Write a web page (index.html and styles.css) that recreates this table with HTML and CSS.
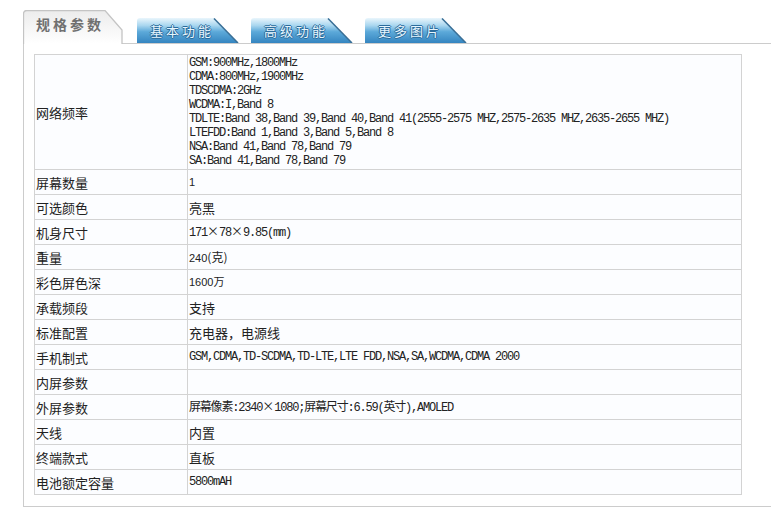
FILE: index.html
```html
<!DOCTYPE html>
<html lang="zh">
<head>
<meta charset="utf-8">
<title>规格参数</title>
<link rel="stylesheet" href="styles.css">
</head>
<body>
<div class="page">
  <div class="tabs">
    <div class="tab tab-active">
      <svg class="tab-bg" width="100" height="34" viewBox="0 0 100 34">
        <defs>
          <linearGradient id="ga" x1="0" y1="0" x2="0" y2="1">
            <stop offset="0" stop-color="#ececec"/>
            <stop offset="1" stop-color="#ffffff"/>
          </linearGradient>
        </defs>
        <path d="M0.5 34 V4 Q0.5 0.5 4 0.5 H82 L99 20 V34" fill="url(#ga)" stroke="#c4c4c4" stroke-width="1.3"/>
      </svg>
      <span class="tab-label">规格参数</span>
    </div>
    <div class="tab tab-blue">
      <svg class="tab-bg" width="102" height="25" viewBox="0 0 102 25">
        <defs>
          <linearGradient id="gb" x1="0" y1="0" x2="0" y2="1">
            <stop offset="0" stop-color="#eaf6fc"/>
            <stop offset="0.3" stop-color="#a9d6ef"/>
            <stop offset="0.55" stop-color="#5ca9d9"/>
            <stop offset="1" stop-color="#3585c0"/>
          </linearGradient>
        </defs>
        <path d="M0 25 V3 Q0 0 3 0 H77 L101 25 Z" fill="url(#gb)"/>
        <path d="M77 0.5 L101 25" stroke="#3a6f96" stroke-width="1.5"/>
      </svg>
      <span class="tab-label">基本功能</span>
    </div>
    <div class="tab tab-blue">
      <svg class="tab-bg" width="102" height="25" viewBox="0 0 102 25">
        <path d="M0 25 V3 Q0 0 3 0 H77 L101 25 Z" fill="url(#gb)"/>
        <path d="M77 0.5 L101 25" stroke="#3a6f96" stroke-width="1.5"/>
      </svg>
      <span class="tab-label">高级功能</span>
    </div>
    <div class="tab tab-blue">
      <svg class="tab-bg" width="102" height="25" viewBox="0 0 102 25">
        <path d="M0 25 V3 Q0 0 3 0 H77 L101 25 Z" fill="url(#gb)"/>
        <path d="M77 0.5 L101 25" stroke="#3a6f96" stroke-width="1.5"/>
      </svg>
      <span class="tab-label">更多图片</span>
    </div>
  </div>
  <div class="panel">
    <table class="spec">
      <tr class="row-tall">
        <th>网络频率</th>
        <td class="mono">GSM:900MHz,1800MHz<br>CDMA:800MHz,1900MHz<br>TDSCDMA:2GHz<br>WCDMA:I,Band 8<br>TDLTE:Band 38,Band 39,Band 40,Band 41(2555-2575 MHZ,2575-2635 MHZ,2635-2655 MHZ)<br>LTEFDD:Band 1,Band 3,Band 5,Band 8<br>NSA:Band 41,Band 78,Band 79<br>SA:Band 41,Band 78,Band 79</td>
      </tr>
      <tr><th>屏幕数量</th><td class="num">1</td></tr>
      <tr><th>可选颜色</th><td>亮黑</td></tr>
      <tr><th>机身尺寸</th><td class="mono">171<span class="cjk">×</span>78<span class="cjk">×</span>9.85(mm)</td></tr>
      <tr><th>重量</th><td class="num">240<span class="cjk">(克)</span></td></tr>
      <tr><th>彩色屏色深</th><td class="num">1600万</td></tr>
      <tr><th>承载频段</th><td>支持</td></tr>
      <tr><th>标准配置</th><td>充电器，电源线</td></tr>
      <tr><th>手机制式</th><td class="mono">GSM,CDMA,TD-SCDMA,TD-LTE,LTE FDD,NSA,SA,WCDMA,CDMA 2000</td></tr>
      <tr><th>内屏参数</th><td></td></tr>
      <tr><th>外屏参数</th><td class="mono">屏幕像素:2340<span class="cjk">×</span>1080;屏幕尺寸:6.59(英寸),AMOLED</td></tr>
      <tr><th>天线</th><td>内置</td></tr>
      <tr><th>终端款式</th><td>直板</td></tr>
      <tr><th>电池额定容量</th><td class="mono">5800mAH</td></tr>
    </table>
  </div>
</div>
</body>
</html>
```

FILE: styles.css
```css
html, body {
  margin: 0;
  padding: 0;
  background: #ffffff;
  overflow: hidden;
}

body {
  font-family: "Noto Sans CJK SC", "Liberation Sans", sans-serif;
  color: #222;
}

.page {
  padding: 10px 0 0 23px;
}

.tabs {
  display: flex;
  align-items: flex-end;
  height: 33px;
  position: relative;
  z-index: 2;
}

.tab {
  position: relative;
  display: flex;
  align-items: center;
  flex: none;
}

.tab-bg {
  position: absolute;
  left: 0;
  top: 0;
  display: block;
}

.tab-label {
  position: relative;
  white-space: nowrap;
}

.tab-active {
  width: 100px;
  height: 34px;
  margin-bottom: -1px;
}

.tab-active .tab-label {
  padding-left: 13px;
  padding-bottom: 6px;
  font-size: 14px;
  font-weight: bold;
  letter-spacing: 3px;
  color: #707070;
}

.tab-blue {
  width: 102px;
  height: 25px;
  margin-left: 12px;
}

.tab-active + .tab-blue {
  margin-left: 14px;
}

.tab-blue .tab-label {
  padding-left: 13px;
  font-size: 13px;
  letter-spacing: 3px;
  color: #e6f6ff;
  text-shadow: 1px 0 0 #2b6c9c, -1px 0 0 #2b6c9c, 0 1px 0 #2b6c9c, 0 -1px 0 #2b6c9c;
}

.panel {
  border: 1px solid #cccccc;
  border-right: none;
  padding: 10px 0 11px 10px;
}

.spec {
  border-collapse: collapse;
  width: 708px;
  background: #fcfdff;
}

.spec th,
.spec td {
  border: 1px solid #d3d3d3;
  height: 24px;
  padding: 0 1px;
  text-align: left;
  vertical-align: middle;
  font-size: 13px;
  line-height: 17px;
  color: #222;
}

.spec th {
  width: 150px;
  font-weight: normal;
}

.spec td.mono {
  font-family: "Liberation Mono", "Noto Sans CJK SC", monospace;
  font-size: 12px;
  letter-spacing: -1.2px;
}

.spec td.num {
  font-family: "Liberation Sans", "Noto Sans CJK SC", sans-serif;
  font-size: 11px;
}

.spec .cjk {
  font-family: "Noto Sans CJK SC", sans-serif;
  font-size: 12px;
  letter-spacing: 0;
}

.row-tall td.mono {
  line-height: 14px;
  padding-top: 1px;
  padding-bottom: 1px;
}
```
